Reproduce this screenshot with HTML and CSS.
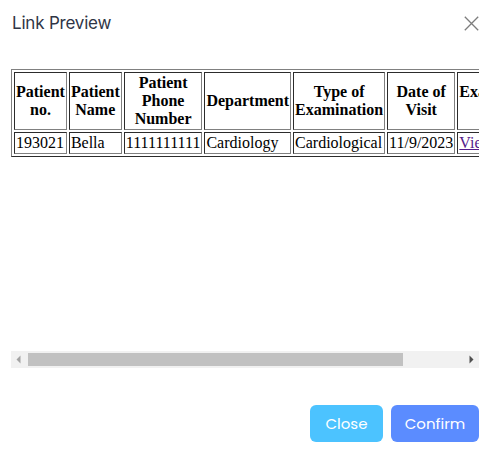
FILE: index.html
```html
<!DOCTYPE html>
<html>
<head>
<meta charset="utf-8">
<link rel="stylesheet" href="styles.css">
</head>
<body>
<div class="modal">
  <div class="modal-header">
    <span class="modal-title">Link Preview</span>
    <svg class="close-icon" width="15" height="15" viewBox="0 0 15 15"><path d="M0.8 0.8 L14.2 14.2 M14.2 0.8 L0.8 14.2" stroke="#7d7d7d" stroke-width="1.3" fill="none"/></svg>
  </div>
  <div class="preview">
    <div class="viewport">
      <table border="1" class="data-table">
        <tr>
          <th>Patient no.</th>
          <th>Patient Name</th>
          <th>Patient Phone Number</th>
          <th>Department</th>
          <th>Type of Examination</th>
          <th>Date of Visit</th>
          <th>Examination Report</th>
        </tr>
        <tr>
          <td>193021</td>
          <td>Bella</td>
          <td>1111111111</td>
          <td>Cardiology</td>
          <td>Cardiological</td>
          <td>11/9/2023</td>
          <td><a href="#">View</a></td>
        </tr>
      </table>
    </div>
    <div class="hscroll">
      <div class="sb-btn"><svg width="17" height="17" viewBox="0 0 17 17"><polygon points="5.5,8.5 9.5,4.5 9.5,12.5" fill="#a3a3a3"/></svg></div>
      <div class="sb-track"><div class="sb-thumb"></div></div>
      <div class="sb-btn"><svg width="17" height="17" viewBox="0 0 17 17"><polygon points="11.5,8.5 7.5,4.5 7.5,12.5" fill="#505050"/></svg></div>
    </div>
  </div>
  <div class="modal-footer">
    <button class="btn btn-close">Close</button>
    <button class="btn btn-confirm">Confirm</button>
  </div>
</div>
</body>
</html>
```
FILE: styles.css
```css
html, body {
  margin: 0;
  padding: 0;
  background: #ffffff;
}
.modal {
  width: 489px;
  height: 452px;
  box-sizing: border-box;
  padding: 0 10px 0 11px;
  display: flex;
  flex-direction: column;
}
.modal-header {
  height: 46px;
  display: flex;
  align-items: center;
  justify-content: space-between;
}
.modal-title {
  font-family: Inter, "Noto Sans", sans-serif;
  font-size: 17px;
  color: #2f3546;
  letter-spacing: -0.2px;
  padding-left: 1px;
}
.preview {
  margin-top: 23px;
  height: 299px;
  display: flex;
  flex-direction: column;
}
.viewport {
  flex: 1;
  overflow: hidden;
}
.hscroll {
  height: 17px;
  display: flex;
  background: #f1f1f1;
}
.sb-btn {
  width: 17px;
  height: 17px;
  flex: none;
}
.sb-btn svg {
  display: block;
}
.sb-track {
  flex: 1;
  padding: 2px 0;
}
.sb-thumb {
  width: 375px;
  height: 13px;
  background: #c1c1c1;
}
.data-table {
  font-family: "Liberation Serif", "Times New Roman", serif;
  font-size: 16px;
  color: #000;
}
.data-table a {
  color: #551a8b;
}
.modal-footer {
  margin-top: 37px;
  display: flex;
  justify-content: flex-end;
  gap: 8px;
}
.btn {
  height: 37px;
  border: none;
  border-radius: 6px;
  color: #ffffff;
  font-family: Poppins, Inter, "Noto Sans", sans-serif;
  font-size: 15px;
  cursor: pointer;
}
.btn-close {
  width: 73px;
  background: #4cc3ff;
}
.btn-confirm {
  width: 88px;
  background: #5b8cff;
}
```
